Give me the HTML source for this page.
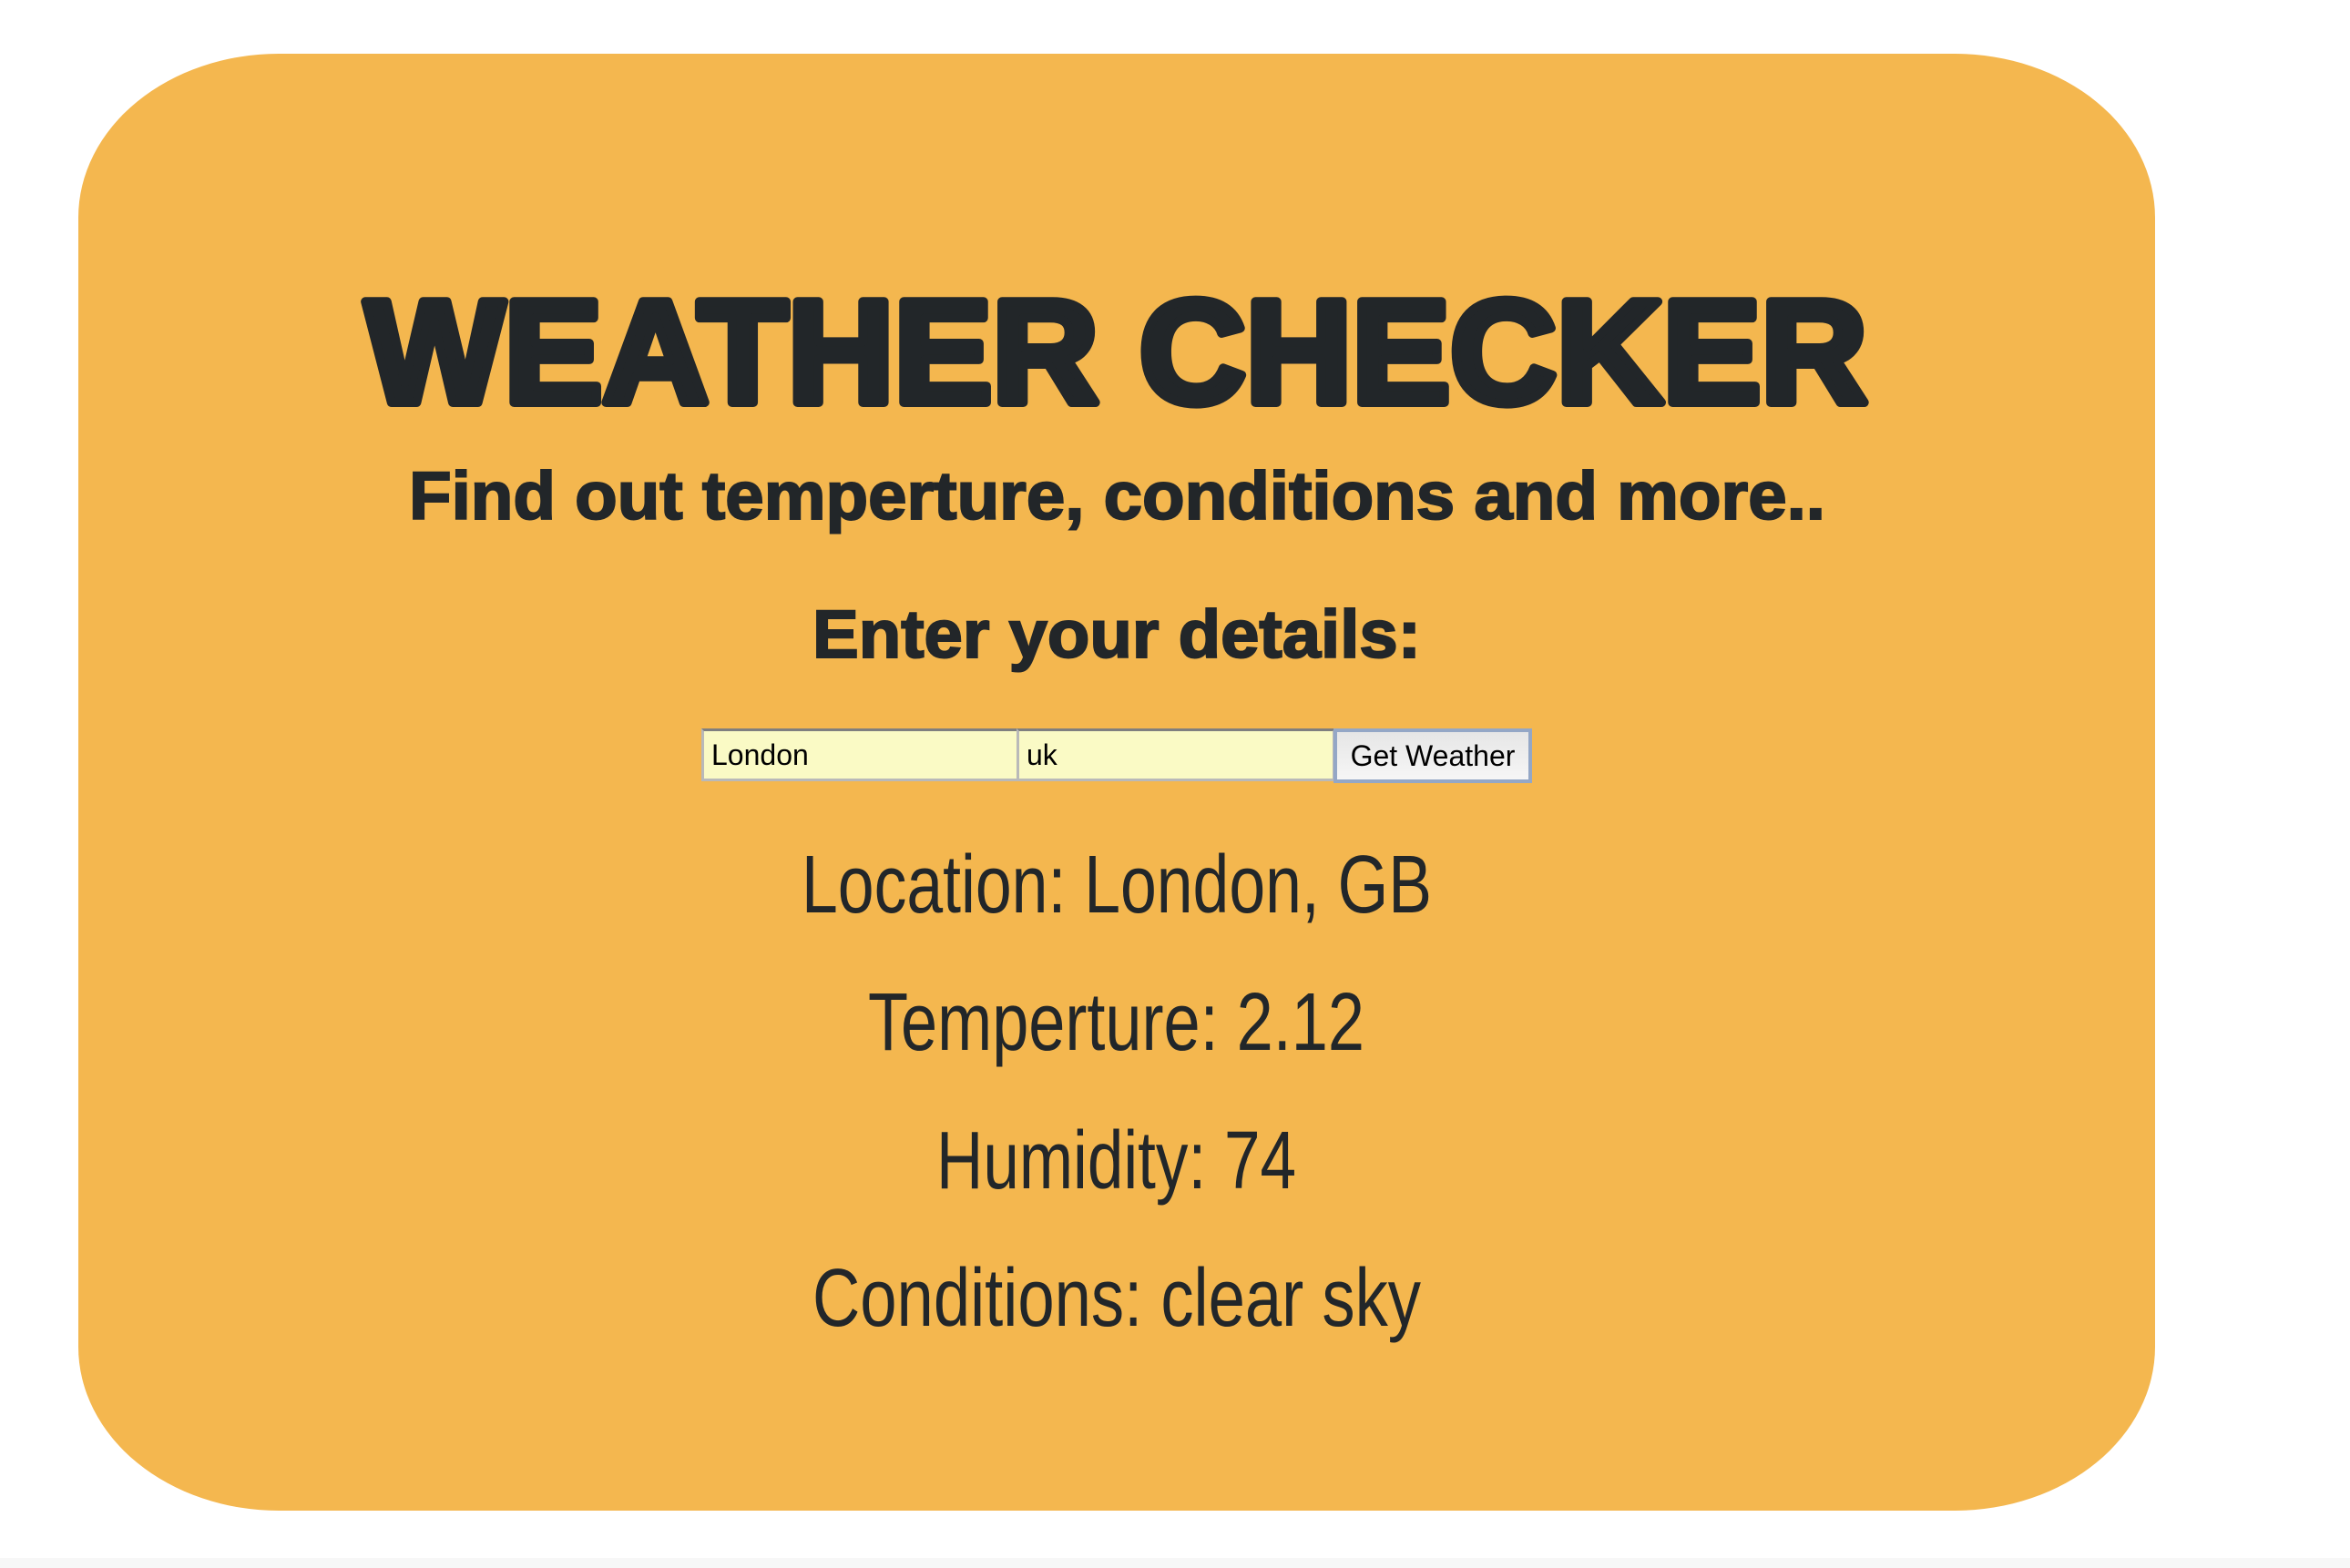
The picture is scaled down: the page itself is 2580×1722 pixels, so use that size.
<!DOCTYPE html>
<html><head><meta charset="utf-8"><style>
html,body{margin:0;padding:0;background:#fff;width:2580px;height:1722px;overflow:hidden}
svg{position:absolute;left:0;top:0}
.inp{position:absolute;top:800px;height:58px;background:#fafac5;box-sizing:border-box;border:3px solid #b9b9b9;border-top-color:#7f7f7f;font:32px "Liberation Sans",sans-serif;line-height:52px;padding-left:8px;color:#000}
.btn{position:absolute;top:800px;left:1464px;width:218px;height:60px;box-sizing:border-box;border:4px solid #94a7c6;background:linear-gradient(#e6e6e6,#f6f6f6);font:32px "Liberation Sans",sans-serif;text-align:center;line-height:52px;color:#000}
</style></head><body>
<div style="position:absolute;left:0;top:1711px;width:2580px;height:11px;background:#f7f7f7"></div>
<div style="position:absolute;left:86px;top:59px;width:2280px;height:1600px;background:#f4b74f;border-radius:220px / 180px"></div>
<svg width="2580" height="1722">
<text x="401" y="442" textLength="1649" lengthAdjust="spacingAndGlyphs" font-family="Liberation Sans" font-weight="bold" font-size="161" fill="#222629" stroke="#222629" stroke-width="10" stroke-linejoin="round">WEATHER CHECKER</text>
<text x="449" y="570" textLength="1555" lengthAdjust="spacingAndGlyphs" font-family="Liberation Sans" font-weight="bold" font-size="74" fill="#222629" stroke="#222629" stroke-width="2">Find out temperture, conditions and more..</text>
<text x="892" y="722" textLength="668" lengthAdjust="spacingAndGlyphs" font-family="Liberation Sans" font-weight="bold" font-size="74" fill="#222629" stroke="#222629" stroke-width="2">Enter your details:</text>
<text x="880" y="1002" textLength="692" lengthAdjust="spacingAndGlyphs" font-family="Liberation Sans" font-size="90" fill="#222629">Location: London, GB</text>
<text x="953" y="1153" textLength="545" lengthAdjust="spacingAndGlyphs" font-family="Liberation Sans" font-size="90" fill="#222629">Temperture: 2.12</text>
<text x="1028" y="1305" textLength="395" lengthAdjust="spacingAndGlyphs" font-family="Liberation Sans" font-size="90" fill="#222629">Humidity: 74</text>
<text x="892" y="1456" textLength="668" lengthAdjust="spacingAndGlyphs" font-family="Liberation Sans" font-size="90" fill="#222629">Conditions: clear sky</text>
</svg>
<div class="inp" style="left:770px;width:349px">London</div>
<div class="inp" style="left:1116px;width:350px">uk</div>
<div class="btn">Get Weather</div>
</body></html>
